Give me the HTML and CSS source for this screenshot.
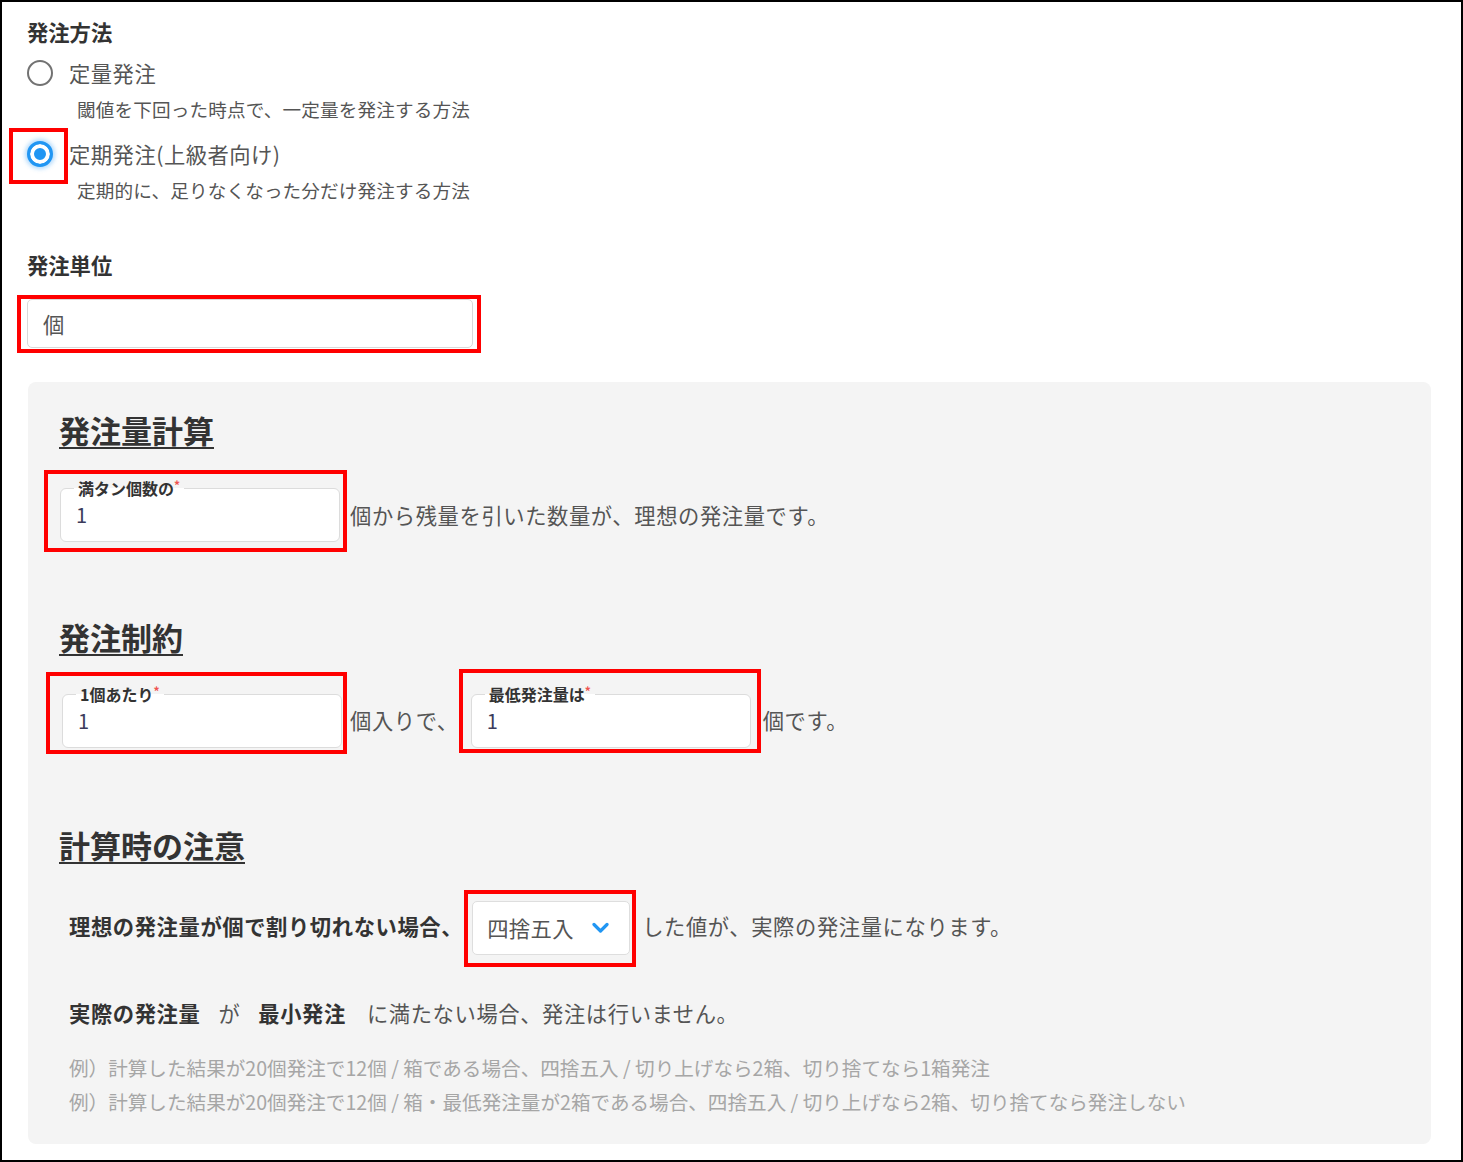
FILE: index.html
```html
<!DOCTYPE html>
<html lang="ja">
<head>
<meta charset="utf-8">
<title>発注設定</title>
<link rel="stylesheet" href="styles.css">
</head>
<body>
<div class="frame">
  <div class="sec-title">発注方法</div>
  <div class="radio-row r1">
    <span class="radio"></span>
    <span class="radio-label">定量発注</span>
  </div>
  <div class="radio-desc d1">閾値を下回った時点で、一定量を発注する方法</div>
  <div class="radio-row r2">
    <span class="radio checked hl-radio"></span>
    <span class="radio-label">定期発注(上級者向け)</span>
  </div>
  <div class="radio-desc d2">定期的に、足りなくなった分だけ発注する方法</div>

  <div class="sec-title unit-title">発注単位</div>
  <div class="hl-unit"><div class="unit-input">個</div></div>

  <div class="panel">
    <h2 class="panel-h h-calc">発注量計算</h2>
    <div class="row row-calc">
      <div class="hl hl-a">
        <div class="fbox"><span class="flabel">満タン個数の<span class="req">*</span></span><span class="fval">1</span></div>
      </div>
      <span class="row-text t-calc">個から残量を引いた数量が、理想の発注量です。</span>
    </div>

    <h2 class="panel-h h-cons">発注制約</h2>
    <div class="row row-cons">
      <div class="hl hl-b">
        <div class="fbox"><span class="flabel">1個あたり<span class="req">*</span></span><span class="fval">1</span></div>
      </div>
      <span class="row-text t-cons">個入りで、</span>
      <div class="hl hl-c">
        <div class="fbox"><span class="flabel">最低発注量は<span class="req">*</span></span><span class="fval">1</span></div>
      </div>
      <span class="row-text t-cons t-end">個です。</span>
    </div>

    <h2 class="panel-h h-note">計算時の注意</h2>
    <div class="row row-note">
      <span class="row-text t-note strong">理想の発注量が個で割り切れない場合、</span>
      <div class="hl hl-d">
        <div class="select">
          <span class="select-text">四捨五入</span>
          <svg class="chev" width="17" height="12" viewBox="0 0 17 12" aria-hidden="true"><path d="M2 2.5 L8.5 9 L15 2.5" fill="none" stroke="#2196f3" stroke-width="3.2" stroke-linecap="round" stroke-linejoin="round"/></svg>
        </div>
      </div>
      <span class="row-text t-note t-after">した値が、実際の発注量になります。</span>
    </div>

    <div class="row-min">
      <strong class="strong">実際の発注量</strong><span class="ga">が</span><strong class="strong">最小発注</strong><span class="rest">に満たない場合、発注は行いません。</span>
    </div>

    <div class="example ex1">例）計算した結果が20個発注で12個 / 箱である場合、四捨五入 / 切り上げなら2箱、切り捨てなら1箱発注</div>
    <div class="example">例）計算した結果が20個発注で12個 / 箱・最低発注量が2箱である場合、四捨五入 / 切り上げなら2箱、切り捨てなら発注しない</div>
  </div>
</div>
</body>
</html>
```

FILE: styles.css
```css
html, body {
  margin: 0;
  padding: 0;
  background: #fff;
}

body {
  font-family: "Noto Sans CJK JP", "Noto Sans", sans-serif;
  color: #555;
}

.frame {
  width: 1463px;
  height: 1162px;
  box-sizing: border-box;
  border: 2px solid #000;
  padding: 17px 0 0 25px;
  overflow: hidden;
}

.sec-title {
  font-size: 21.3px;
  font-weight: bold;
  line-height: 26px;
  color: #333;
}

.unit-title {
  margin-top: 49px;
}

.radio-row {
  display: flex;
  align-items: center;
  height: 30px;
}

.r1 { margin-top: 13px; }
.r2 { margin-top: 17px; }

.radio {
  position: relative;
  flex: none;
  width: 26px;
  height: 26px;
  box-sizing: border-box;
  border-radius: 50%;
  border: 2.5px solid #727272;
  background: #fff;
}

.radio.checked {
  border: 3px solid #2196f3;
  background: #2196f3;
  box-shadow: inset 0 0 0 4px #fff, 0 0 4px 2px rgba(33, 150, 243, 0.35);
}

.hl-radio::after {
  content: "";
  position: absolute;
  left: -21px;
  top: -16px;
  width: 59px;
  height: 56px;
  box-sizing: border-box;
  border: 4px solid #f00;
}

.radio-label {
  margin-left: 16px;
  font-size: 21.3px;
  line-height: 30px;
  letter-spacing: 0.5px;
  color: #555;
  white-space: nowrap;
}

.radio-desc {
  padding-left: 50px;
  font-size: 18.6px;
  line-height: 26px;
  letter-spacing: 0.15px;
  color: #555;
}

.d1 { margin-top: 8px; }
.d2 { margin-top: 8px; }

.hl-unit {
  width: fit-content;
  margin-top: 17px;
  margin-left: -10px;
  border: 4px solid #f00;
  padding: 0 4px 1px 6px;
}

.unit-input {
  width: 446px;
  height: 49px;
  box-sizing: border-box;
  border: 1px solid #d9d9d9;
  border-radius: 5px;
  background: #fff;
  display: flex;
  align-items: center;
  padding-left: 15px;
  font-size: 21.3px;
  color: #555;
}

.panel {
  margin-top: 29px;
  margin-left: 1px;
  width: 1403px;
  box-sizing: border-box;
  padding: 28px 16px 25px;
  background: #f4f4f4;
  border-radius: 8px;
}

.panel-h {
  margin: 0 0 0 15px;
  font-size: 31px;
  font-weight: bold;
  line-height: 40px;
  color: #333;
  text-decoration: underline;
  text-decoration-thickness: 2px;
  text-underline-offset: 4px;
}

.h-cons { margin-top: 65px; }
.h-note { margin-top: 71px; }

.row {
  display: flex;
  align-items: flex-start;
}

.row-calc { margin-top: 20px; }
.row-cons { margin-top: 12px; }
.row-note { margin-top: 25px; margin-left: 25px; }

.hl {
  border: 4px solid #f00;
  flex: none;
}

.hl-a { padding: 14px 3px 6px 12px; }
.hl-b { padding: 18px 1px 2px 12px; margin-top: 3px; margin-left: 2px; }
.hl-c { padding: 21px 6px 1px 8px; margin-left: 0; }
.hl-d { padding: 7px 2px 8px 4px; margin-left: 1px; }

.fbox {
  position: relative;
  width: 280px;
  height: 54px;
  box-sizing: border-box;
  border: 1px solid #dcdcdc;
  border-radius: 6px;
  background: #fff;
  display: flex;
  align-items: center;
  padding-left: 15px;
}

.flabel {
  position: absolute;
  left: 13px;
  top: -10px;
  padding: 0 4px;
  font-size: 16px;
  font-weight: bold;
  line-height: 18px;
  color: #333;
  white-space: nowrap;
  background: linear-gradient(to bottom, #f4f4f4 50%, #fff 50%);
}

.req {
  color: #ef5350;
  font-size: 12px;
  line-height: 12px;
  vertical-align: top;
}

.fval {
  font-size: 20px;
  line-height: 30px;
  color: #3b3b5b;
}

.row-text {
  font-size: 21.3px;
  line-height: 30px;
  letter-spacing: 0.6px;
  color: #555;
  white-space: nowrap;
}

.t-calc { margin-top: 30px; margin-left: 3px; }
.t-cons { margin-top: 36px; margin-left: 3px; }
.t-end { margin-left: 2px; }
.t-note { margin-top: 21px; }
.t-after { margin-left: 6px; }

.strong {
  font-weight: bold;
  color: #333;
}

.select {
  width: 158px;
  height: 54px;
  box-sizing: border-box;
  border: 1px solid #dedede;
  border-radius: 5px;
  background: #fff;
  display: flex;
  align-items: center;
  padding-left: 14px;
}

.select-text {
  font-size: 21.3px;
  line-height: 30px;
  letter-spacing: 0.4px;
  color: #555;
}

.chev {
  margin-left: 18px;
  flex: none;
}

.row-min {
  margin-top: 31px;
  margin-left: 25px;
  font-size: 21.3px;
  line-height: 30px;
  letter-spacing: 0.6px;
  color: #555;
  white-space: nowrap;
}

.ga { margin: 0 18px; }
.rest { margin-left: 21px; }

.example {
  margin-left: 25px;
  font-size: 19.6px;
  line-height: 34px;
  color: #a6a6a6;
  white-space: nowrap;
}

.ex1 { margin-top: 23px; }
```
